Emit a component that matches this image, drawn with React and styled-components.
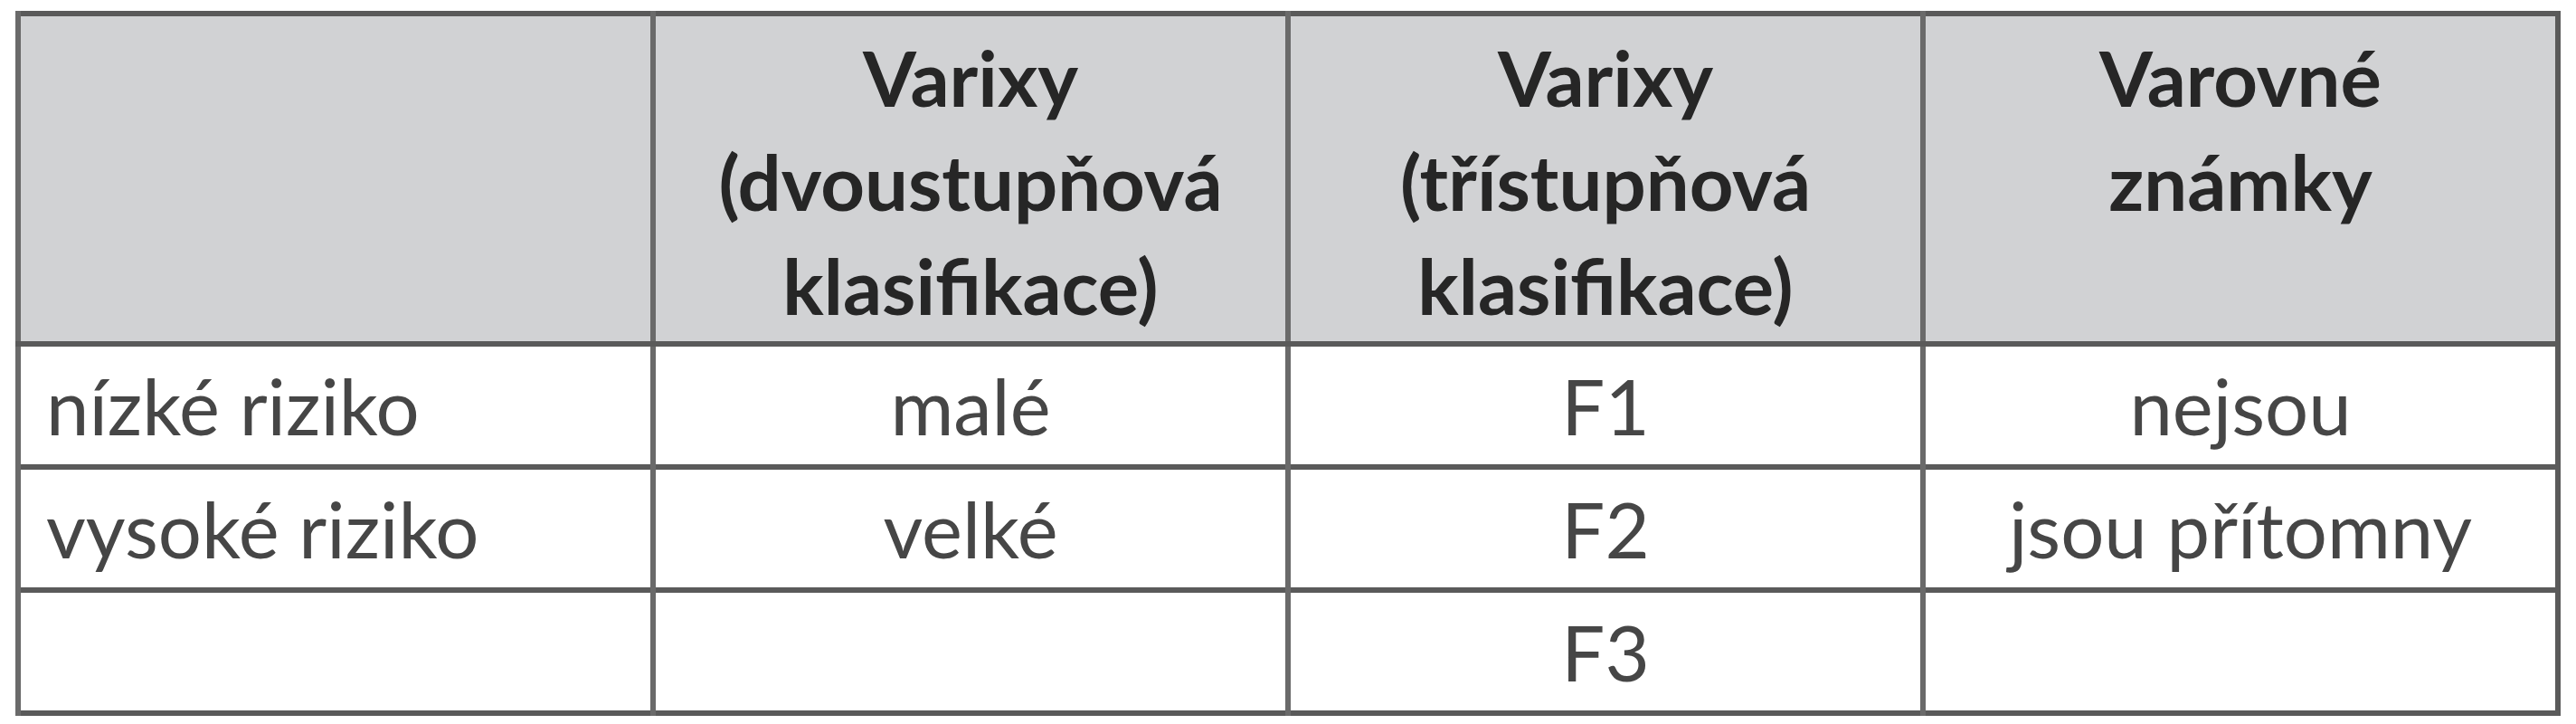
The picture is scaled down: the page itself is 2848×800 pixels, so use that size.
import React from "react";
import styled, { createGlobalStyle } from "styled-components";

const GlobalStyle = createGlobalStyle`
	html, body {
		margin: 0;
		padding: 0;
		background: #ffffff;
	}
	body {
		font-family: Lato, "Open Sans", "Noto Sans", sans-serif;
	}
`;

const Page = styled.div`
	padding: 12px 0 0 17px;
`;

const Table = styled.table`
	width: 2814px;
	table-layout: fixed;
	border-collapse: collapse;
	border: 6px solid #5a5a5a;
`;

const HeadRow = styled.tr`
	background-color: #d1d2d4;
`;

const HeadCell = styled.th`
	vertical-align: top;
	text-align: center;
	padding: 10px 8px 4px;
	font-size: 85px;
	line-height: 115px;
	font-weight: 700;
	color: #262626;
	border-left: 6px solid #6a6a6a;
	border-bottom: 6px solid #5a5a5a;
`;

const Row = styled.tr`
	background-color: #ffffff;
	border-top: 6px solid #5a5a5a;
`;

const Cell = styled.td`
	text-align: ${(props) => props.$align || "center"};
	padding: 14px 8px 14px ${(props) => (props.$align === "left" ? "28px" : "8px")};
	height: 102px;
	font-size: 85px;
	line-height: 102px;
	font-weight: 400;
	color: #464646;
	border-left: 6px solid #6a6a6a;
	white-space: nowrap;
`;

const rows = [
	["nízké riziko", "malé", "F1", "nejsou"],
	["vysoké riziko", "velké", "F2", "jsou přítomny"],
	["", "", "F3", ""],
];

export default function App() {
	return (
		<>
			<GlobalStyle />
			<Page>
				<Table>
					<thead>
						<HeadRow>
							<HeadCell />
							<HeadCell>
								Varixy
								<br />
								(dvoustupňová
								<br />
								klasifikace)
							</HeadCell>
							<HeadCell>
								Varixy
								<br />
								(třístupňová
								<br />
								klasifikace)
							</HeadCell>
							<HeadCell>
								Varovné
								<br />
								známky
							</HeadCell>
						</HeadRow>
					</thead>
					<tbody>
						{rows.map((r, i) => (
							<Row key={i}>
								{r.map((c, j) => (
									<Cell key={j} $align={j === 0 ? "left" : "center"}>
										{c}
									</Cell>
								))}
							</Row>
						))}
					</tbody>
				</Table>
			</Page>
		</>
	);
}
